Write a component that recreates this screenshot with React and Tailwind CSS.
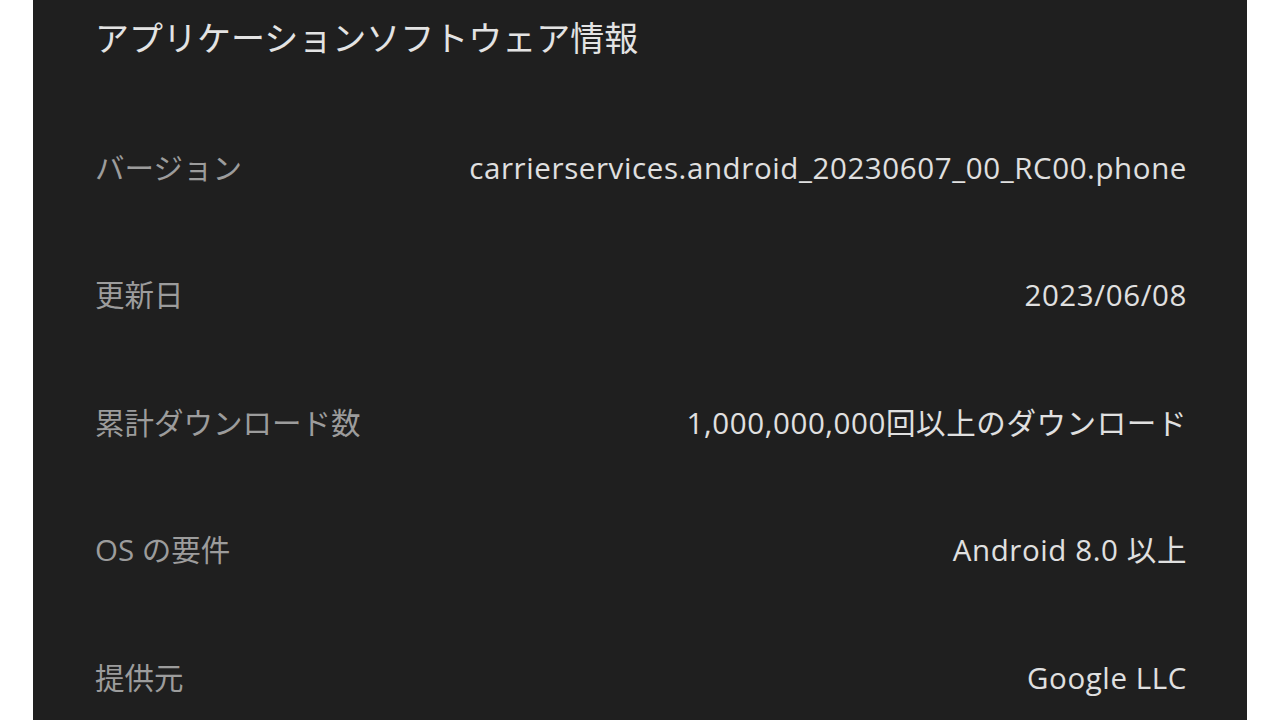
export default function App() {
  const rows = [
    ["バージョン", "carrierservices.android_20230607_00_RC00.phone"],
    ["更新日", "2023/06/08"],
    ["累計ダウンロード数", "1,000,000,000回以上のダウンロード"],
    ["OS の要件", "Android 8.0 以上"],
    ["提供元", "Google LLC"],
  ];
  return (
    <div
      className="w-[1280px] h-[720px] bg-white px-[33px] overflow-hidden"
      style={{ fontFamily: '"Open Sans", "Noto Sans CJK JP", sans-serif' }}
    >
      <div className="h-full bg-[#1f1f1f] pl-[62px] pr-[60px]">
        <div className="h-[104px] pt-[16px]">
          <div className="text-[34px] leading-[44px] text-[#e3e3e3]">
            アプリケーションソフトウェア情報
          </div>
        </div>
        {rows.map(([k, v]) => (
          <div key={k} className="h-[127.5px] flex items-center justify-between">
            <div className="text-[29.5px] text-[#9c9c9c]">{k}</div>
            <div className="text-[29.5px] tracking-[0.6px] text-[#e0e0e0]">{v}</div>
          </div>
        ))}
      </div>
    </div>
  );
}
